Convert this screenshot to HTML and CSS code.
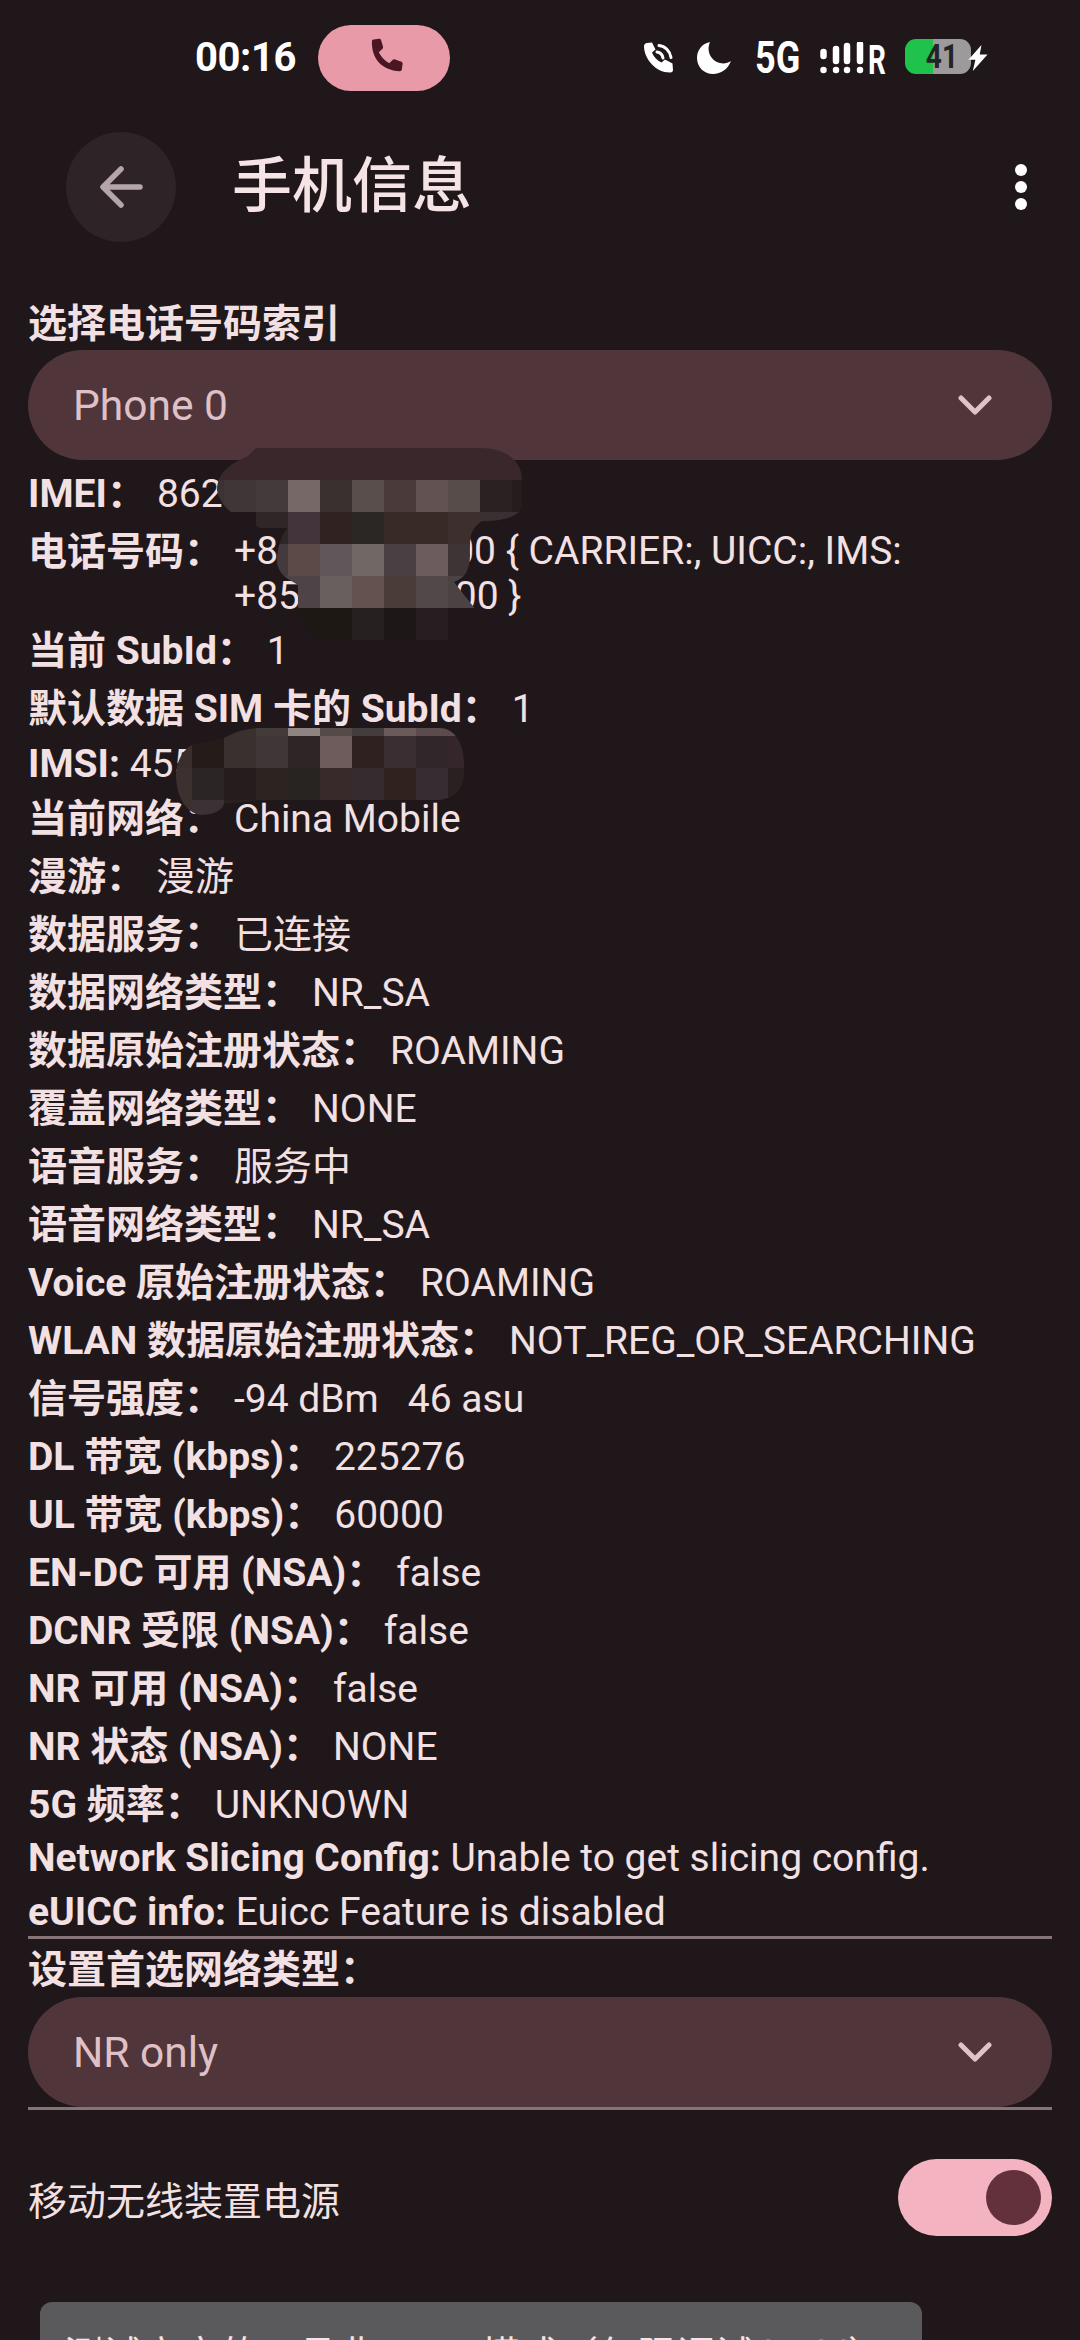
FILE: index.html
```html
<!DOCTYPE html>
<html lang="zh-CN">
<head>
<meta charset="utf-8">
<title>手机信息</title>
<link rel="stylesheet" href="styles.css">
</head>
<body>
<div class="screen">
  <header class="status">
    <span class="time">00:16</span>
    <span class="call-pill">
      <svg class="call-icon" viewBox="0 0 24 24"><path d="M6.6 2.400 9.400 2c.5 0 .9.2 1.100.7l1 3.400c.1.500 0 .9-.4 1.200L9.300 9c1 2.200 2.900 4.300 5.400 5.700l1.800-1.700c.4-.3.8-.4 1.300-.2l3.300 1.200c.4.200.7.600.6 1.100l-.4 2.900c-.1.500-.5.900-1 .9C10.600 18.600 5.400 12 5.700 3.300c0-.5.400-.8.900-.9z"/></svg>
    </span>
    <div class="status-icons">
      <svg class="ic-volte" viewBox="0 0 32 32"><path d="M4 1 9 .5l3.500 7-3.500 3c1.500 4 5 8 9.500 10l3.500-3 7.500 4 .5 6.500c0 1.500-1 2.500-2.500 2.500C13 31 1 17 1 4c0-1.500 1.500-3 3-3z" fill="#fff"/><path d="M14 10c3 .5 5.500 3 6 6M16 3.500c6 .5 11 5.500 12 12" fill="none" stroke="#fff" stroke-width="3" stroke-linecap="round"/></svg>
      <svg class="ic-moon" viewBox="0 0 34 32"><path d="M13 0C4 2 0 9 0 16c0 9 7 16 16 16 8 0 15-5 18-13-3 2-7 3-11 2C14 19 9 9 13 0z" fill="#fff"/></svg>
      <span class="net">5G</span>
      <svg class="ic-signal" viewBox="0 0 48 32"><g stroke="#fff" stroke-width="6.500" stroke-linecap="round"><path d="M5.500 10v4M18 7v12M29 4v15M42 2v17"/><path d="M5.500 28v.1M18 28v.1M29 28v.1M42 28v.1"/></g></svg>
      <span class="roam">R</span>
      <span class="battery"><span class="battery-num">41</span></span>
      <svg class="ic-bolt" viewBox="0 0 24 30"><path d="M16 0 1 17h8l-3 13 17-19h-9z" fill="#fff"/></svg>
    </div>
  </header>

  <div class="toolbar">
    <button class="back" aria-label="返回">
      <svg viewBox="0 0 44 44"><path d="M41 22H5M22 4 4 22l18 18" fill="none" stroke="#b5a5a8" stroke-width="5.500" stroke-linecap="round" stroke-linejoin="round"/></svg>
    </button>
    <h1 class="title">手机信息</h1>
    <div class="more"><i></i><i></i><i></i></div>
  </div>

  <main class="content">
    <div class="section-label">选择电话号码索引</div>
    <div class="spinner">
      <span>Phone 0</span>
      <svg class="chev" viewBox="0 0 34 20"><path d="M3 3l14 14L31 3" fill="none" stroke="#e0c2c8" stroke-width="5" stroke-linecap="round" stroke-linejoin="round"/></svg>
    </div>

    <div class="info">
      <div class="row first"><b>IMEI：</b><span>862</span></div>
      <div class="row phone"><b>电话号码：</b><span>+8&nbsp;&nbsp;&nbsp;&nbsp;&nbsp;&nbsp;&nbsp;&nbsp;&nbsp;&nbsp;&nbsp;&nbsp;&nbsp;&nbsp;&nbsp;&nbsp;&nbsp;&nbsp;00 { CARRIER:, UICC:, IMS:<br>+85&nbsp;&nbsp;&nbsp;&nbsp;&nbsp;&nbsp;&nbsp;&nbsp;&nbsp;&nbsp;&nbsp;&nbsp;&nbsp;&nbsp;&nbsp;&nbsp;00 }</span></div>
      <div class="row"><b>当前 SubId：</b><span>1</span></div>
      <div class="row"><b>默认数据 SIM 卡的 SubId：</b><span>1</span></div>
      <div class="row imsi"><b>IMSI:</b> <em>455</em></div>
      <div class="row"><b>当前网络：</b><span>China Mobile</span></div>
      <div class="row"><b>漫游：</b><span>漫游</span></div>
      <div class="row"><b>数据服务：</b><span>已连接</span></div>
      <div class="row"><b>数据网络类型：</b><span>NR_SA</span></div>
      <div class="row"><b>数据原始注册状态：</b><span>ROAMING</span></div>
      <div class="row"><b>覆盖网络类型：</b><span>NONE</span></div>
      <div class="row"><b>语音服务：</b><span>服务中</span></div>
      <div class="row"><b>语音网络类型：</b><span>NR_SA</span></div>
      <div class="row"><b>Voice 原始注册状态：</b><span>ROAMING</span></div>
      <div class="row"><b>WLAN 数据原始注册状态：</b><span>NOT_REG_OR_SEARCHING</span></div>
      <div class="row"><b>信号强度：</b><span>-94 dBm&nbsp;&nbsp;&nbsp;46 asu</span></div>
      <div class="row"><b>DL 带宽 (kbps)：</b><span>225276</span></div>
      <div class="row"><b>UL 带宽 (kbps)：</b><span>60000</span></div>
      <div class="row"><b>EN-DC 可用 (NSA)：</b><span>false</span></div>
      <div class="row"><b>DCNR 受限 (NSA)：</b><span>false</span></div>
      <div class="row"><b>NR 可用 (NSA)：</b><span>false</span></div>
      <div class="row"><b>NR 状态 (NSA)：</b><span>NONE</span></div>
      <div class="row"><b>5G 频率：</b><span>UNKNOWN</span></div>
      <div class="row plain lead"><b>Network Slicing Config:</b> <em>Unable to get slicing config.</em></div>
      <div class="row plain"><b>eUICC info:</b> <em>Euicc Feature is disabled</em></div>
    </div>

    <div class="divider"></div>
    <div class="section-label second">设置首选网络类型：</div>
    <div class="spinner">
      <span>NR only</span>
      <svg class="chev" viewBox="0 0 34 20"><path d="M3 3l14 14L31 3" fill="none" stroke="#e0c2c8" stroke-width="5" stroke-linecap="round" stroke-linejoin="round"/></svg>
    </div>
    <div class="divider"></div>

    <div class="radio-row">
      <span>移动无线装置电源</span>
      <div class="switch"><i></i></div>
    </div>
  </main>

  <div class="toast">测试高音的工具非 · 000 模式（仅限调试 build）</div>

  <svg class="redact" viewBox="0 0 1080 2340" width="1080" height="2340">
    <defs>
      <clipPath id="clip-a"><path d="M256 448H480C505 448 522 460 522 480V505C522 515 505 522 482 521C470 530 470 535 470 555C470 570 465 578 454 582L476 610C476 625 465 640 448 640H320C305 630 298 615 298 604V585C290 580 277 575 277 560C277 545 285 528 288 528H260C250 522 222 515 217 490C217 470 235 462 248 456Z"/></clipPath>
      <clipPath id="clip-b"><path d="M228 736C240 730 250 728 262 728H440C455 728 464 745 464 762V778C460 795 450 798 440 800H260L224 804C222 812 210 815 200 815C185 812 176 795 176 775C176 760 185 748 192 745L224 738Z"/></clipPath>
    </defs>
    <g clip-path="url(#clip-a)">
      <rect x="210" y="440" width="330" height="40" fill="#3a272b"/>
      <rect x="210" y="480" width="14" height="32" fill="#3d3233"/><rect x="224" y="480" width="32" height="32" fill="#3f3637"/><rect x="256" y="480" width="32" height="32" fill="#433a3b"/><rect x="288" y="480" width="32" height="32" fill="#756867"/><rect x="320" y="480" width="32" height="32" fill="#3a3030"/><rect x="352" y="480" width="32" height="32" fill="#5a4e4c"/><rect x="384" y="480" width="32" height="32" fill="#4a3a3a"/><rect x="416" y="480" width="32" height="32" fill="#625252"/><rect x="448" y="480" width="32" height="32" fill="#574c49"/><rect x="480" y="480" width="32" height="32" fill="#2a2222"/><rect x="512" y="480" width="12" height="32" fill="#241c1d"/>
      <rect x="210" y="512" width="46" height="32" fill="#1f1719"/><rect x="256" y="512" width="32" height="32" fill="#302627"/><rect x="288" y="512" width="32" height="32" fill="#42343a"/><rect x="320" y="512" width="32" height="32" fill="#2f2220"/><rect x="352" y="512" width="32" height="32" fill="#2b2725"/><rect x="384" y="512" width="32" height="32" fill="#382a27"/><rect x="416" y="512" width="32" height="32" fill="#382a27"/><rect x="448" y="512" width="32" height="32" fill="#3d2f2d"/><rect x="480" y="512" width="44" height="10" fill="#3a3032"/>
      <rect x="270" y="544" width="18" height="32" fill="#443a3d"/><rect x="288" y="544" width="32" height="32" fill="#5c4a48"/><rect x="320" y="544" width="32" height="32" fill="#5f5759"/><rect x="352" y="544" width="32" height="32" fill="#716866"/><rect x="384" y="544" width="32" height="32" fill="#484042"/><rect x="416" y="544" width="32" height="32" fill="#6d5c5d"/><rect x="448" y="544" width="30" height="32" fill="#3d3436"/>
      <rect x="270" y="576" width="18" height="32" fill="#4e4346"/><rect x="288" y="576" width="32" height="32" fill="#4e4346"/><rect x="320" y="576" width="32" height="32" fill="#68605f"/><rect x="352" y="576" width="32" height="32" fill="#64524f"/><rect x="384" y="576" width="32" height="32" fill="#4a3c38"/><rect x="416" y="576" width="32" height="32" fill="#524849"/><rect x="448" y="576" width="30" height="32" fill="#4a4243"/>
      <rect x="270" y="608" width="82" height="32" fill="#1e1815"/><rect x="352" y="608" width="32" height="32" fill="#262021"/><rect x="384" y="608" width="32" height="32" fill="#1e1718"/><rect x="416" y="608" width="32" height="32" fill="#281e22"/><rect x="448" y="608" width="30" height="32" fill="#1f1719"/>
    </g>
    <g clip-path="url(#clip-b)">
      <rect x="224" y="720" width="32" height="16" fill="#3a3030"/><rect x="256" y="720" width="32" height="16" fill="#433a3a"/><rect x="288" y="720" width="32" height="16" fill="#908482"/><rect x="320" y="720" width="32" height="16" fill="#544a48"/><rect x="352" y="720" width="32" height="16" fill="#453d3d"/><rect x="384" y="720" width="32" height="16" fill="#6b5a5a"/><rect x="416" y="720" width="48" height="16" fill="#5b4b4c"/>
      <rect x="170" y="736" width="22" height="32" fill="#3a2e2c"/><rect x="192" y="736" width="32" height="32" fill="#231c19"/><rect x="224" y="736" width="32" height="32" fill="#3a3030"/><rect x="256" y="736" width="32" height="32" fill="#3f3637"/><rect x="288" y="736" width="32" height="32" fill="#2e2626"/><rect x="320" y="736" width="32" height="32" fill="#6d5c5b"/><rect x="352" y="736" width="32" height="32" fill="#2f211f"/><rect x="384" y="736" width="32" height="32" fill="#3a2e33"/><rect x="416" y="736" width="32" height="32" fill="#2f272a"/><rect x="448" y="736" width="18" height="32" fill="#34262a"/>
      <rect x="170" y="768" width="22" height="32" fill="#3d312f"/><rect x="192" y="768" width="32" height="32" fill="#2b2526"/><rect x="224" y="768" width="32" height="32" fill="#241c1d"/><rect x="256" y="768" width="32" height="32" fill="#2d2320"/><rect x="288" y="768" width="32" height="32" fill="#282421"/><rect x="320" y="768" width="32" height="32" fill="#38292a"/><rect x="352" y="768" width="32" height="32" fill="#342c2f"/><rect x="384" y="768" width="32" height="32" fill="#30231f"/><rect x="416" y="768" width="32" height="32" fill="#352d31"/><rect x="448" y="768" width="18" height="32" fill="#2a2022"/>
      <rect x="170" y="800" width="22" height="20" fill="#3d312f"/><rect x="192" y="800" width="32" height="20" fill="#3a3234"/><rect x="224" y="800" width="40" height="20" fill="#2a2022"/>
    </g>
  </svg>
</div>
</body>
</html>
```

FILE: styles.css
```css
* { box-sizing: border-box; }
html, body { margin: 0; padding: 0; background: #1f1719; }
.screen {
  position: relative;
  width: 1080px;
  height: 2340px;
  overflow: hidden;
  background: #1f1719;
  color: #f2e0e3;
  font-family: Roboto, "Noto Sans CJK SC", sans-serif;
  font-size: 39px;
}

/* status bar */
.status {
  height: 116px;
  padding-left: 195px;
  display: flex;
  align-items: center;
}
.time { width: 101px; color: #fff; font-size: 40px; font-weight: 700; line-height: 1; letter-spacing: -0.4px; white-space: nowrap; }
.call-pill {
  margin-left: 22px;
  width: 132px;
  height: 66px;
  border-radius: 33px;
  background: #e89aa8;
  display: flex;
  align-items: center;
  justify-content: center;
}
.call-icon { width: 46px; height: 46px; fill: #4a1623; }
.status-icons {
  margin-left: 193px;
  display: flex;
  align-items: center;
  height: 40px;
}
.ic-volte { width: 32px; height: 32px; }
.ic-moon { width: 34px; height: 32px; margin-left: 22px; }
.net {
  margin-left: 24px;
  width: 47px;
  color: #fff;
  font-size: 44px;
  font-weight: 700;
  line-height: 1;
  transform: scaleX(.82);
  transform-origin: left center;
  white-space: nowrap;
}
.ic-signal { width: 48px; height: 32px; margin-left: 16px; }
.roam { margin-left: 2px; width: 20px; color: #fff; font-size: 41px; font-weight: 700; line-height: 1; transform: scaleX(.68) translateY(2px); transform-origin: left center; }
.battery {
  margin-left: 17px;
  margin-bottom: 3px;
  padding-left: 8px;
  width: 66px;
  height: 35px;
  border-radius: 11px;
  background: linear-gradient(90deg, #1fc24b 0 28px, #9d9a9b 28px);
  display: flex;
  align-items: center;
  justify-content: center;
}
.battery-num { color: #222426; font-size: 33px; font-weight: 700; line-height: 1; transform: scaleX(.85); }
.ic-bolt { width: 22px; height: 26px; margin-left: -4px; }

/* toolbar */
.toolbar {
  height: 142px;
  padding: 0 53px 0 66px;
  display: flex;
  align-items: center;
}
.back {
  width: 110px;
  height: 110px;
  padding: 0;
  border: 0;
  border-radius: 50%;
  background: #2e2427;
  display: flex;
  align-items: center;
  justify-content: center;
}
.back svg { width: 44px; height: 44px; }
.title { margin: 0 0 0 56px; font-size: 60px; font-weight: 500; line-height: 1; color: #f5e3e6; }
.more { margin-left: auto; display: flex; flex-direction: column; gap: 5px; }
.more i { display: block; width: 12px; height: 12px; border-radius: 50%; background: #fff; }

/* content */
.content { padding: 0 28px; }
.section-label { margin-top: 40px; height: 52px; font-size: 39px; font-weight: 700; line-height: 52px; color: #f2e0e3; }
.section-label.second { margin-top: 8px; height: 50px; line-height: 47px; }
.spinner {
  height: 110px;
  padding: 0 60px 0 45px;
  border-radius: 55px;
  background: #50353a;
  color: #dfc0c6;
  font-size: 42.5px;
  display: flex;
  align-items: center;
  justify-content: space-between;
}
.chev { width: 34px; height: 20px; }

.info { padding-top: 5px; margin-bottom: -3px; }
.row { display: flex; line-height: 58px; white-space: nowrap; }
.row b { font-weight: 700; }
.row span { margin-left: 11px; }
.row em { font-style: normal; }
.row.phone span { line-height: 45px; padding-top: 6px; padding-bottom: 3px; }
.row.imsi { line-height: 52px; display: block; }
.row.plain { display: block; line-height: 54px; }
.row.plain.lead { margin-top: -3px; }

.divider { height: 3px; background: #857378; }
.radio-row {
  margin-top: 49px;
  height: 77px;
  display: flex;
  align-items: center;
  justify-content: space-between;
}
.switch {
  width: 154px;
  height: 77px;
  border-radius: 39px;
  background: #f4b3c0;
  padding-right: 11px;
  display: flex;
  align-items: center;
  justify-content: flex-end;
}
.switch i { display: block; width: 55px; height: 55px; border-radius: 50%; background: #63313b; }

/* overlays */
.toast {
  position: absolute;
  left: 40px;
  top: 2302px;
  width: 882px;
  height: 100px;
  padding: 22px 24px;
  border-radius: 12px;
  background: #5a5a5c;
  color: #f5e3e6;
  white-space: nowrap;
}
.redact { position: absolute; left: 0; top: 0; pointer-events: none; }
```
